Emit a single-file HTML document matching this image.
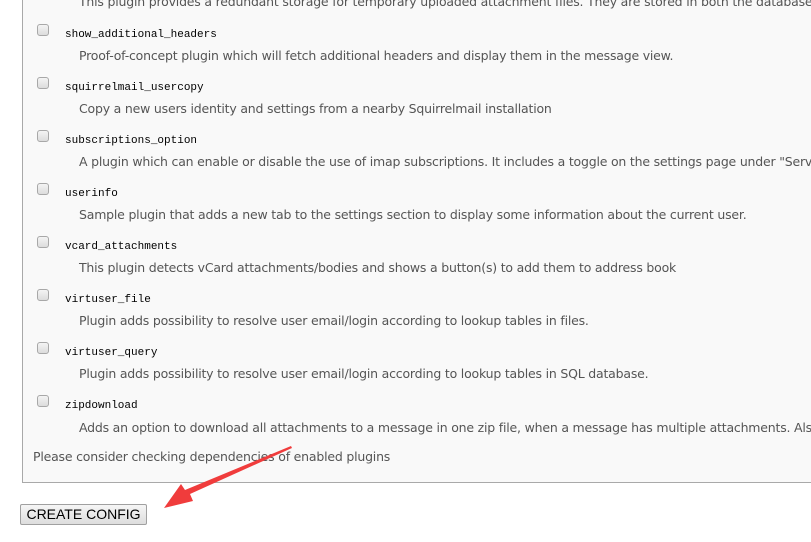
<!DOCTYPE html>
<html><head><meta charset="utf-8"><style>
html,body{margin:0;padding:0;background:#fff;width:811px;height:542px;overflow:hidden}
.wrap{position:relative;width:811px;height:542px;overflow:hidden}
.box{position:absolute;left:22px;top:-10px;width:789px;height:492px;background:#f9f9f9;border-left:1px solid #a9a9a9;border-bottom:1px solid #a9a9a9}
.cb{position:absolute;left:37px;width:10px;height:10px;border:1px solid #a8a8a8;border-radius:3px;background:linear-gradient(#f4f4f4,#dcdcdc)}
.nm{position:absolute;left:65px;font:11px "Liberation Mono",monospace;color:#000}
.ds{position:absolute;left:79px;font:12.5px "DejaVu Sans","Liberation Sans",sans-serif;color:#555;white-space:nowrap;letter-spacing:-0.2px}
.note{position:absolute;left:33px;top:449px;font:12.5px "DejaVu Sans","Liberation Sans",sans-serif;color:#555;letter-spacing:-0.2px;white-space:nowrap}
.btn{position:absolute;left:20px;top:504px;width:125px;height:19px;border:1px solid #a0a0a0;border-radius:2px;background:linear-gradient(#f6f6f6,#dddddd);font:14px "Liberation Sans",sans-serif;color:#000;text-align:center;line-height:19px}
</style></head><body><div class="wrap">
<div class="box"></div>
<div class="ds" style="top:-6px">This plugin provides a redundant storage for temporary uploaded attachment files. They are stored in both the database</div>

<div class="cb" style="top:24px"></div><div class="nm" style="top:29px">show_additional_headers</div>
<div class="ds" style="top:48px">Proof-of-concept plugin which will fetch additional headers and display them in the message view.</div>

<div class="cb" style="top:77px"></div><div class="nm" style="top:82px">squirrelmail_usercopy</div>
<div class="ds" style="top:101px">Copy a new users identity and settings from a nearby Squirrelmail installation</div>

<div class="cb" style="top:130px"></div><div class="nm" style="top:135px">subscriptions_option</div>
<div class="ds" style="top:154px">A plugin which can enable or disable the use of imap subscriptions. It includes a toggle on the settings page under "Server Settings"</div>

<div class="cb" style="top:183px"></div><div class="nm" style="top:188px">userinfo</div>
<div class="ds" style="top:207px">Sample plugin that adds a new tab to the settings section to display some information about the current user.</div>

<div class="cb" style="top:236px"></div><div class="nm" style="top:241px">vcard_attachments</div>
<div class="ds" style="top:260px">This plugin detects vCard attachments/bodies and shows a button(s) to add them to address book</div>

<div class="cb" style="top:289px"></div><div class="nm" style="top:294px">virtuser_file</div>
<div class="ds" style="top:313px">Plugin adds possibility to resolve user email/login according to lookup tables in files.</div>

<div class="cb" style="top:342px"></div><div class="nm" style="top:347px">virtuser_query</div>
<div class="ds" style="top:366px">Plugin adds possibility to resolve user email/login according to lookup tables in SQL database.</div>

<div class="cb" style="top:395px"></div><div class="nm" style="top:400px">zipdownload</div>
<div class="ds" style="top:420px">Adds an option to download all attachments to a message in one zip file, when a message has multiple attachments. Also</div>

<div class="note">Please consider checking dependencies of enabled plugins</div>
<div class="btn">CREATE CONFIG</div>

<svg style="position:absolute;left:0;top:0" width="811" height="542">
<polygon points="291,446 292,448 190,494 193,501 164,508 181,484 185,490" fill="#f03c3c"/>
</svg>
</div></body></html>
